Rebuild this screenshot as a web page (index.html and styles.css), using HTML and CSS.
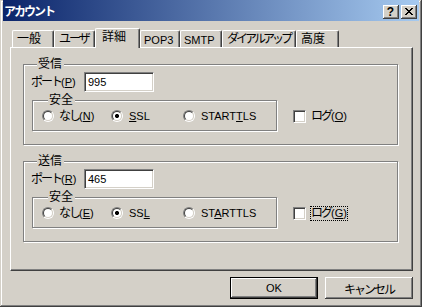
FILE: index.html
```html
<!DOCTYPE html>
<html lang="ja">
<head>
<meta charset="utf-8">
<title>アカウント</title>
<link rel="stylesheet" href="styles.css">
</head>
<body>
<div class="window">
  <div class="titlebar">
    <span class="title">アカウント</span>
    <div class="tb-buttons">
      <span class="tb-btn help">?</span>
      <span class="tb-btn close"><svg width="8" height="7" viewBox="0 0 8 7"><path d="M0 0h2v1h-2zM6 0h2v1h-2zM1 1h2v1h-2zM5 1h2v1h-2zM2 2h4v1h-4zM3 3h2v1h-2zM2 4h4v1h-4zM1 5h2v1h-2zM5 5h2v1h-2zM0 6h2v1h-2zM6 6h2v1h-2z" fill="#000"/></svg></span>
    </div>
  </div>
  <div class="client">
    <div class="tabs">
      <span class="tab t1">一般</span>
      <span class="tab t2 k">ユーザ</span>
      <span class="tab t3 selected">詳細</span>
      <span class="tab t4 lat">POP3</span>
      <span class="tab t5 lat">SMTP</span>
      <span class="tab t6 k3">ダイアルアップ</span>
      <span class="tab t7">高度</span>
    </div>
    <div class="panel">
      <fieldset class="group">
        <legend>受信</legend>
        <div class="port-row">
          <label class="port-label"><span class="k">ポート</span><span class="lat">(<u>P</u>)</span></label>
          <span class="field">995</span>
        </div>
        <div class="sec-row">
          <fieldset class="group inner">
            <legend>安全</legend>
            <div class="radios">
              <span class="opt o1"><span class="radio"></span><span><span class="k">なし</span><span class="lat">(<u>N</u>)</span></span></span>
              <span class="opt o2"><span class="radio on"></span><span class="lat"><u>S</u>SL</span></span>
              <span class="opt"><span class="radio"></span><span class="lat">START<u>T</u>LS</span></span>
            </div>
          </fieldset>
          <span class="check-item"><span class="checkbox"></span><span class="check-text"><span class="k">ログ</span><span class="lat">(<u>O</u>)</span></span></span>
        </div>
      </fieldset>
      <fieldset class="group second">
        <legend>送信</legend>
        <div class="port-row">
          <label class="port-label"><span class="k">ポート</span><span class="lat">(<u>R</u>)</span></label>
          <span class="field">465</span>
        </div>
        <div class="sec-row">
          <fieldset class="group inner">
            <legend>安全</legend>
            <div class="radios">
              <span class="opt o1"><span class="radio"></span><span><span class="k">なし</span><span class="lat">(<u>E</u>)</span></span></span>
              <span class="opt o2"><span class="radio on"></span><span class="lat">SS<u>L</u></span></span>
              <span class="opt"><span class="radio"></span><span class="lat">ST<u>A</u>RTTLS</span></span>
            </div>
          </fieldset>
          <span class="check-item"><span class="checkbox"></span><span class="check-text focus"><span class="k">ログ</span><span class="lat">(<u>G</u>)</span></span></span>
        </div>
      </fieldset>
    </div>
    <div class="buttons">
      <button class="btn default lat">OK</button>
      <button class="btn"><span class="k">キャンセル</span></button>
    </div>
  </div>
</div>
</body>
</html>
```
FILE: styles.css
```css
html, body {
  margin: 0;
  padding: 0;
  background: #d4d0c8;
}
body {
  font-family: "Liberation Sans", "Noto Sans CJK JP", sans-serif;
  font-size: 12px;
  color: #000;
}
.lat {
  font-size: 11px;
}
.k {
  letter-spacing: -2px;
}
.k3 {
  letter-spacing: -3px;
}
u {
  text-decoration-thickness: 1px;
  text-underline-offset: 1px;
}
.window {
  width: 422px;
  height: 307px;
  box-sizing: border-box;
  padding: 0 3px 3px 3px;
  background: #d4d0c8;
  box-shadow: inset -1px -1px #404040, inset 1px 1px #d4d0c8, inset -2px -2px #808080, inset 2px 2px #fff;
  display: flex;
  flex-direction: column;
}
.titlebar {
  height: 21px;
  flex: none;
  background: linear-gradient(to right, #0a246a, #a6caf0);
  display: flex;
  align-items: center;
  justify-content: space-between;
  padding: 0 2px 0 1px;
}
.title {
  color: #fff;
  font-weight: bold;
  font-size: 12px;
  line-height: 14px;
  letter-spacing: -2px;
  font-family: "Noto Sans CJK JP", sans-serif;
}
.tb-buttons {
  display: flex;
  gap: 2px;
  margin-top: 2px;
}
.tb-btn {
  width: 16px;
  height: 14px;
  box-sizing: border-box;
  background: #d4d0c8;
  box-shadow: inset -1px -1px #404040, inset 1px 1px #fff, inset -2px -2px #808080;
  display: flex;
  align-items: center;
  justify-content: center;
}
.help {
  font-family: "Liberation Sans", sans-serif;
  font-weight: bold;
  font-size: 12px;
  line-height: 12px;
  padding-right: 1px;
}
.close svg {
  display: block;
  margin-right: 1px;
}
.client {
  flex: 1;
  display: flex;
  flex-direction: column;
  padding: 7px 0 0 7px;
}
.tabs {
  display: flex;
  align-items: flex-end;
  height: 19px;
  margin-left: 2px;
  position: relative;
  z-index: 1;
}
.tab {
  height: 17px;
  box-sizing: border-box;
  border-top: 1px solid #fff;
  border-left: 1px solid #fff;
  border-right: 1px solid #404040;
  box-shadow: inset -1px 0 #808080;
  border-radius: 2px 2px 0 0;
  padding: 2px 0 0 4px;
  line-height: 13px;
  white-space: nowrap;
  overflow: hidden;
  background: #d4d0c8;
}
.tab.lat {
  padding-left: 3px;
  padding-top: 3px;
}
.t1 { width: 42px; }
.t2 { width: 41px; }
.t3 { width: 45px; }
.t4 { width: 40px; }
.t5 { width: 42px; }
.t6 { width: 74px; }
.t7 { width: 43px; }
.tab.selected {
  height: 20px;
  margin-bottom: -1px;
  padding-left: 6px;
  padding-top: 2px;
}
.panel {
  width: 403px;
  height: 224px;
  box-sizing: border-box;
  border-top: 1px solid #fff;
  border-left: 1px solid #fff;
  border-right: 1px solid #404040;
  border-bottom: 1px solid #404040;
  box-shadow: inset -1px -1px #808080;
  padding: 10px 0 0 12px;
}
.group {
  margin: 0;
  border: 1px solid #808080;
  box-shadow: inset 1px 1px #fff, 1px 1px #fff;
  padding: 2px 0 0 7px;
  width: 375px;
  height: 87px;
  box-sizing: border-box;
  min-width: 0;
}
.group.second {
  margin-top: 10px;
}
legend {
  padding: 0 2px 0 1px;
  margin-left: 6px;
  line-height: 12px;
  height: 12px;
  background: #d4d0c8;
}
.port-row {
  display: flex;
  align-items: center;
  height: 20px;
}
.port-label {
  width: 53px;
  line-height: 14px;
  white-space: nowrap;
}
.field {
  width: 70px;
  height: 20px;
  box-sizing: border-box;
  border: 1px solid;
  border-color: #808080 #fff #fff #808080;
  box-shadow: inset 1px 1px #404040, inset -1px -1px #d4d0c8;
  background: #fff;
  padding: 0 0 0 3px;
  font-size: 11px;
  line-height: 18px;
}
.sec-row {
  display: flex;
  margin-top: 2px;
  margin-left: 1px;
}
.group.inner {
  width: 245px;
  height: 37px;
  padding: 0 0 0 9px;
}
.radios {
  display: flex;
  align-items: center;
  height: 20px;
}
.opt {
  display: flex;
  align-items: center;
  gap: 5px;
  line-height: 14px;
  white-space: nowrap;
}
.o1 { width: 69px; }
.o2 { width: 72px; }
.opt > .lat {
  margin-left: 1px;
}
.radio {
  width: 12px;
  height: 12px;
  box-sizing: border-box;
  border-radius: 50%;
  border: 1px solid;
  border-color: #808080 #fff #fff #808080;
  display: flex;
  flex: none;
}
.radio::before {
  content: "";
  flex: 1;
  border-radius: 50%;
  border: 1px solid;
  border-color: #404040 #d4d0c8 #d4d0c8 #404040;
  background: #fff;
}
.radio.on::before {
  background: radial-gradient(circle, #000 0, #000 1.8px, #fff 2.3px);
}
.check-item {
  display: flex;
  align-items: center;
  gap: 5px;
  margin-left: 16px;
  margin-top: 16px;
  height: 13px;
}
.checkbox {
  width: 13px;
  height: 13px;
  box-sizing: border-box;
  border: 1px solid;
  border-color: #808080 #fff #fff #808080;
  box-shadow: inset 1px 1px #404040, inset -1px -1px #d4d0c8;
  background: #fff;
  flex: none;
}
.check-text {
  line-height: 13px;
  white-space: nowrap;
}
.check-text.focus {
  outline: 1px dotted #000;
  outline-offset: 0;
}
.buttons {
  display: flex;
  justify-content: flex-end;
  gap: 7px;
  width: 403px;
  margin-top: 6px;
}
.btn {
  width: 88px;
  height: 22px;
  box-sizing: border-box;
  border: none;
  background: #d4d0c8;
  box-shadow: inset -1px -1px #404040, inset 1px 1px #fff, inset -2px -2px #808080;
  font-family: "Liberation Sans", "Noto Sans CJK JP", sans-serif;
  font-size: 12px;
  color: #000;
  padding: 0;
  margin: 0;
}
.btn.lat {
  font-size: 11px;
}
.btn.default {
  border: 1px solid #000;
}
```
